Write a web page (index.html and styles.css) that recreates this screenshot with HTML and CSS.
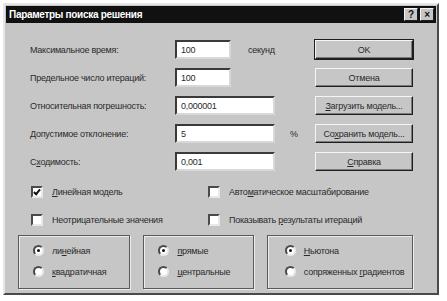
FILE: index.html
```html
<!DOCTYPE html>
<html lang="ru">
<head>
    <meta charset="UTF-8">
    <title>Параметры поиска решения</title>
    <link rel="stylesheet" href="styles.css">
</head>
<body>
    <div class="window">
        <div class="titlebar">
            <span class="title">Параметры поиска решения</span>
            <span class="title-buttons">
                <span class="tbtn">?</span>
                <span class="tbtn">&times;</span>
            </span>
        </div>

        <div class="content">
            <div class="rows">
                <div class="row">
                    <label class="lbl">Максимальное время:</label>
                    <input class="field short" type="text" value="100">
                    <span class="unit unit-sec">секунд</span>
                    <button class="btn default">OK</button>
                </div>
                <div class="row">
                    <label class="lbl">Предельное число итераций:</label>
                    <input class="field short" type="text" value="100">
                    <button class="btn">Отмена</button>
                </div>
                <div class="row">
                    <label class="lbl">Относительная погрешность:</label>
                    <input class="field" type="text" value="0,000001">
                    <button class="btn"><u>З</u>агрузить модель...</button>
                </div>
                <div class="row">
                    <label class="lbl"><u>Д</u>опустимое отклонение:</label>
                    <input class="field" type="text" value="5">
                    <span class="unit unit-pct">%</span>
                    <button class="btn">Со<u>х</u>ранить модель...</button>
                </div>
                <div class="row">
                    <label class="lbl">С<u>х</u>одимость:</label>
                    <input class="field" type="text" value="0,001">
                    <button class="btn"><u>С</u>правка</button>
                </div>
            </div>

            <div class="checks">
                <label class="check"><span class="box checked"></span><span><u>Л</u>инейная модель</span></label>
                <label class="check"><span class="box"></span><span>Авто<u>м</u>атическое масштабирование</span></label>
                <label class="check"><span class="box"></span><span>Неотрицательные значения</span></label>
                <label class="check"><span class="box"></span><span>Показывать <u>р</u>езультаты итераций</span></label>
            </div>

            <div class="groups">
                <div class="group g1">
                    <label class="radio"><span class="dot on"></span><span>ли<u>н</u>ейная</span></label>
                    <label class="radio"><span class="dot"></span><span><u>к</u>вадратичная</span></label>
                </div>
                <div class="group g2">
                    <label class="radio"><span class="dot on"></span><span><u>п</u>рямые</span></label>
                    <label class="radio"><span class="dot"></span><span><u>ц</u>ентральные</span></label>
                </div>
                <div class="group g3">
                    <label class="radio"><span class="dot on"></span><span><u>Н</u>ьютона</span></label>
                    <label class="radio"><span class="dot"></span><span>сопряженных <u>г</u>радиентов</span></label>
                </div>
            </div>
        </div>
    </div>
</body>
</html>
```

FILE: styles.css
```css
:root {
    --face: #c6c6c6;
    --shadow: #7a7a7a;
    --dark: #1e1e1e;
    --light: #f4f4f4;
    --text: #2a2a2a;
}

body {
    margin: 0;
    background-color: #ffffff;
    font-family: "Liberation Sans", Arial, sans-serif;
    font-size: 9px;
    letter-spacing: -0.25px;
    color: var(--text);
}

.window {
    margin: 3px 0 0 3px;
    width: 436px;
    height: 292px;
    box-sizing: border-box;
    background-color: var(--face);
    border: 2px solid;
    border-color: #e6e6e6 #4a4a4a #4a4a4a #e6e6e6;
}

.titlebar {
    height: 17px;
    margin: 1px;
    background-color: #111111;
    display: flex;
    align-items: center;
    justify-content: space-between;
    padding: 0 2px 0 3px;
}

.title {
    color: #ffffff;
    font-weight: bold;
    font-size: 10px;
    letter-spacing: -0.3px;
}

.title-buttons {
    display: flex;
    gap: 2px;
}

.tbtn {
    width: 12px;
    height: 11px;
    background-color: var(--face);
    border: 1px solid;
    border-color: var(--light) var(--dark) var(--dark) var(--light);
    font-size: 10px;
    font-weight: bold;
    line-height: 11px;
    text-align: center;
    color: #111111;
}

.content {
    padding: 16px 24px 0 25px;
}

.rows {
    display: flex;
    flex-direction: column;
    gap: 9px;
}

.row {
    display: flex;
    align-items: center;
    height: 19px;
}

.lbl {
    flex: 0 0 145px;
}

.field {
    width: 100px;
    height: 19px;
    box-sizing: border-box;
    margin: 0;
    padding: 0 4px;
    background-color: #ffffff;
    border: 2px solid;
    border-color: #3a3a3a #d8d8d8 #d8d8d8 #3a3a3a;
    font-family: inherit;
    font-size: 9px;
    letter-spacing: inherit;
    color: var(--text);
}

.field.short {
    width: 56px;
}

.unit-sec {
    margin-left: 17px;
}

.unit-pct {
    margin-left: 15px;
}

.btn {
    margin-left: auto;
    width: 98px;
    height: 19px;
    padding: 0;
    background-color: var(--face);
    border: 1px solid;
    border-color: var(--light) var(--dark) var(--dark) var(--light);
    box-shadow: inset -1px -1px 0 var(--shadow);
    font-family: inherit;
    font-size: 9px;
    letter-spacing: inherit;
    color: var(--text);
}

.btn.default {
    outline: 1px solid var(--dark);
}

.checks {
    display: grid;
    grid-template-columns: 177px 1fr;
    row-gap: 15px;
    margin-top: 14px;
    padding-left: 1px;
}

.check,
.radio {
    display: flex;
    align-items: center;
    height: 13px;
    white-space: nowrap;
}

.box {
    flex-shrink: 0;
    width: 8px;
    height: 8px;
    margin-right: 9px;
    background-color: #ffffff;
    border: 2px solid;
    border-color: #4a4a4a #e8e8e8 #e8e8e8 #4a4a4a;
    position: relative;
}

.box.checked::after {
    content: "";
    position: absolute;
    left: 2px;
    top: 0;
    width: 2px;
    height: 5px;
    border: solid #111111;
    border-width: 0 2px 2px 0;
    transform: rotate(40deg);
}

.groups {
    display: flex;
    gap: 13px;
    margin: 9px 0 0 -12px;
}

.group {
    box-sizing: border-box;
    height: 54px;
    padding: 8px 0 0 14px;
    border: 1px solid #5a5a5a;
    box-shadow: 1px 1px 0 #ececec, inset 1px 1px 0 #ececec;
    display: flex;
    flex-direction: column;
    gap: 8px;
}

.g1 { width: 113px; }
.g2 { width: 111px; }
.g3 { width: 147px; padding-left: 17px; }

.dot {
    flex-shrink: 0;
    width: 7px;
    height: 7px;
    margin-right: 8px;
    border-radius: 50%;
    background-color: #ffffff;
    border: 2px solid;
    border-color: #4a4a4a #e8e8e8 #e8e8e8 #4a4a4a;
    position: relative;
}

.dot.on::after {
    content: "";
    position: absolute;
    left: 2px;
    top: 2px;
    width: 3px;
    height: 3px;
    border-radius: 50%;
    background-color: #111111;
}
```
